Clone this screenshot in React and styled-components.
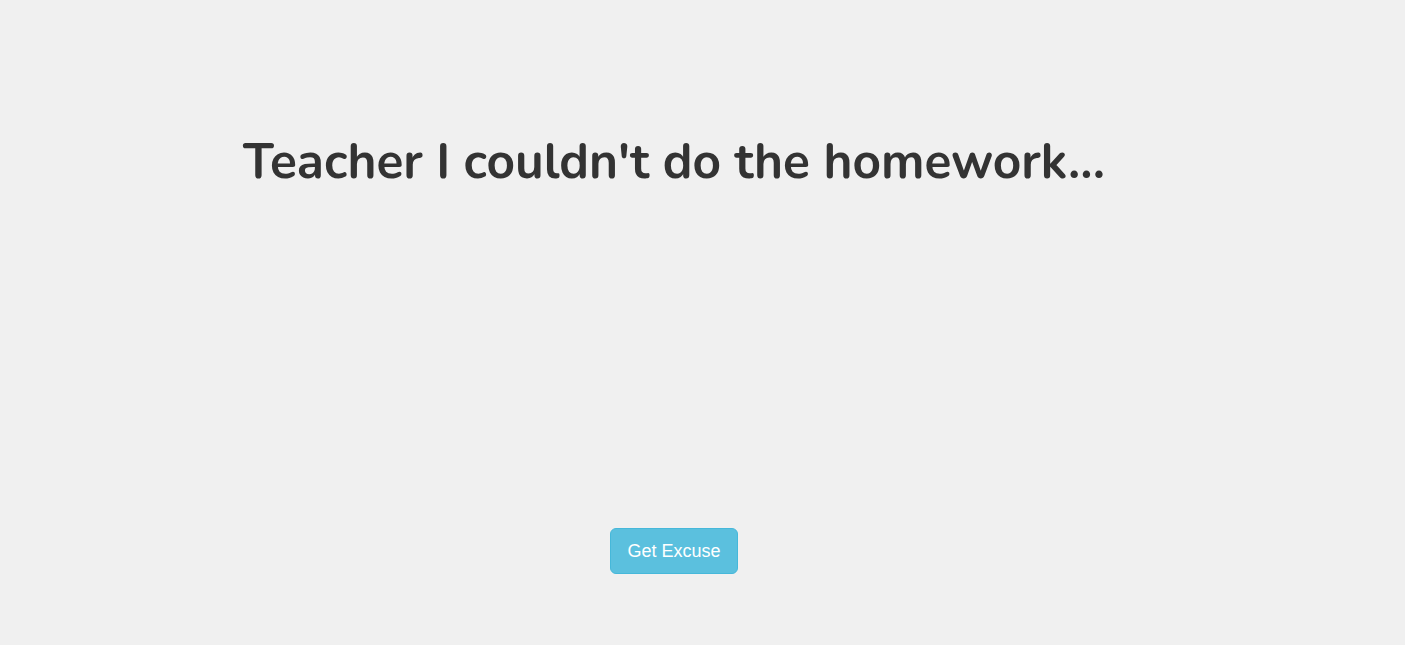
import React, { useState } from "react";
import styled, { createGlobalStyle } from "styled-components";

const GlobalStyle = createGlobalStyle`
  body {
    margin: 0;
    background: #f0f0f0;
    font-family: "Liberation Sans", Arial, sans-serif;
  }
`;

const Page = styled.main`
  width: 1332px;
  margin-left: 8px;
  min-height: 645px;
  display: flex;
  flex-direction: column;
  align-items: center;
`;

const Title = styled.h1`
  margin: 130px 0 0;
  font-family: Nunito, Lato, "Open Sans", sans-serif;
  font-weight: 700;
  font-size: 49.6px;
  line-height: 64px;
  color: #333333;
`;

const Excuse = styled.p`
  margin: 0;
  height: 334px;
  font-family: Nunito, Lato, sans-serif;
  font-size: 24px;
  color: #333333;
`;

const Button = styled.button`
  padding: 11px 16px 9px;
  font-family: "Liberation Sans", Arial, sans-serif;
  font-size: 18px;
  line-height: 1.3333;
  color: #ffffff;
  background: #5bc0de;
  border: 1px solid #46b8da;
  border-radius: 6px;
  cursor: pointer;

  &:hover {
    background: #31b0d5;
  }
`;

const App = () => {
  const [excuse] = useState("");

  return (
    <>
      <GlobalStyle />
      <Page>
        <Title>Teacher I couldn't do the homework...</Title>
        <Excuse>{excuse}</Excuse>
        <Button>Get Excuse</Button>
      </Page>
    </>
  );
};

export default App;
